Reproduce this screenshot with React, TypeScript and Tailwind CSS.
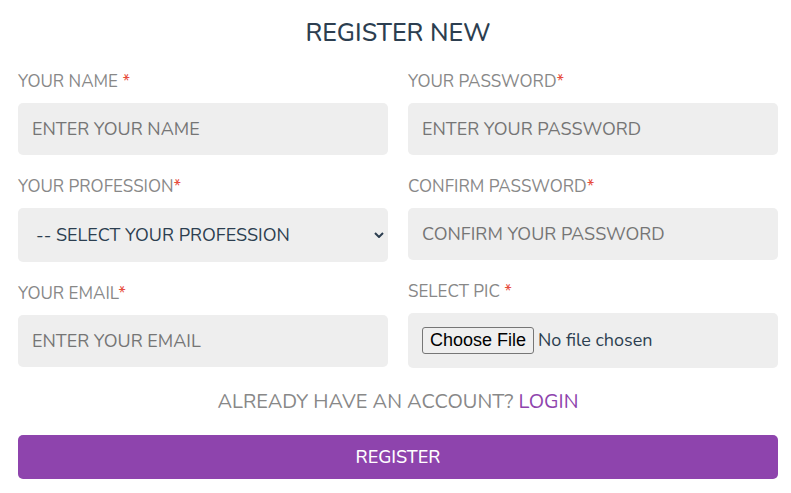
import type { ReactNode } from "react";

const control =
  "block w-full rounded-[5px] bg-[#eee] px-[14px] text-[18px] leading-6 text-[#2c3e50] placeholder:text-[#757575] outline-none";

type FieldProps = {
  id: string;
  label: string;
  children: ReactNode;
};

function Field({ id, label, children }: FieldProps) {
  return (
    <div>
      <label htmlFor={id} className="mb-[10px] block text-[17px] leading-[23px] text-[#888]">
        {label}
        <span className="text-[#e74c3c]">*</span>
      </label>
      {children}
    </div>
  );
}

export default function App() {
  return (
    <form className="bg-white pt-4 pr-[13px] pb-[14px] pl-[18px] font-['Nunito','Lato',sans-serif] font-normal">
      <h3 className="mb-5 text-center text-[25px] leading-[34px] font-medium text-[#2c3e50]">REGISTER NEW</h3>
      <div className="grid grid-cols-2 items-start gap-5">
        <div className="flex flex-col gap-5">
          <Field id="name" label="YOUR NAME ">
            <input id="name" type="text" placeholder="ENTER YOUR NAME" className={`${control} h-[52px]`} />
          </Field>
          <Field id="profession" label="YOUR PROFESSION">
            <div className="relative">
              <select id="profession" defaultValue="" className={`${control} h-[54px] appearance-none pl-[18px]`}>
                <option value="">-- SELECT YOUR PROFESSION</option>
                <option value="student">STUDENT</option>
                <option value="teacher">TEACHER</option>
              </select>
              <svg
                aria-hidden="true"
                viewBox="0 0 10 6"
                className="pointer-events-none absolute top-6 right-1 h-[6px] w-[10px]"
                fill="none"
                stroke="#2c3e50"
                strokeWidth="2"
              >
                <path d="M1 1l4 4 4-4" />
              </svg>
            </div>
          </Field>
          <Field id="email" label="YOUR EMAIL">
            <input id="email" type="email" placeholder="ENTER YOUR EMAIL" className={`${control} h-[52px]`} />
          </Field>
        </div>
        <div className="flex flex-col gap-5">
          <Field id="password" label="YOUR PASSWORD">
            <input id="password" type="password" placeholder="ENTER YOUR PASSWORD" className={`${control} h-[52px]`} />
          </Field>
          <Field id="confirm" label="CONFIRM PASSWORD">
            <input id="confirm" type="password" placeholder="CONFIRM YOUR PASSWORD" className={`${control} h-[52px]`} />
          </Field>
          <Field id="pic" label="SELECT PIC ">
            <input
              id="pic"
              type="file"
              accept="image/*"
              className={`${control} py-[14px] file:mr-1 file:h-[27px] file:rounded-[3px] file:border file:border-solid file:border-[#767676] file:bg-[#efefef] file:px-[7px] file:font-['Liberation_Sans',sans-serif] file:text-[18px] file:leading-[21px] file:text-black`}
            />
          </Field>
        </div>
      </div>
      <p className="my-5 text-center text-[20px] leading-[27px] text-[#888]">
        ALREADY HAVE AN ACCOUNT?{" "}
        <a href="#login" className="text-[#8e44ad]">
          LOGIN
        </a>
      </p>
      <button type="submit" className="block h-11 w-full rounded-[5px] bg-[#8e44ad] text-center text-[18px] font-medium text-white">
        REGISTER
      </button>
    </form>
  );
}
